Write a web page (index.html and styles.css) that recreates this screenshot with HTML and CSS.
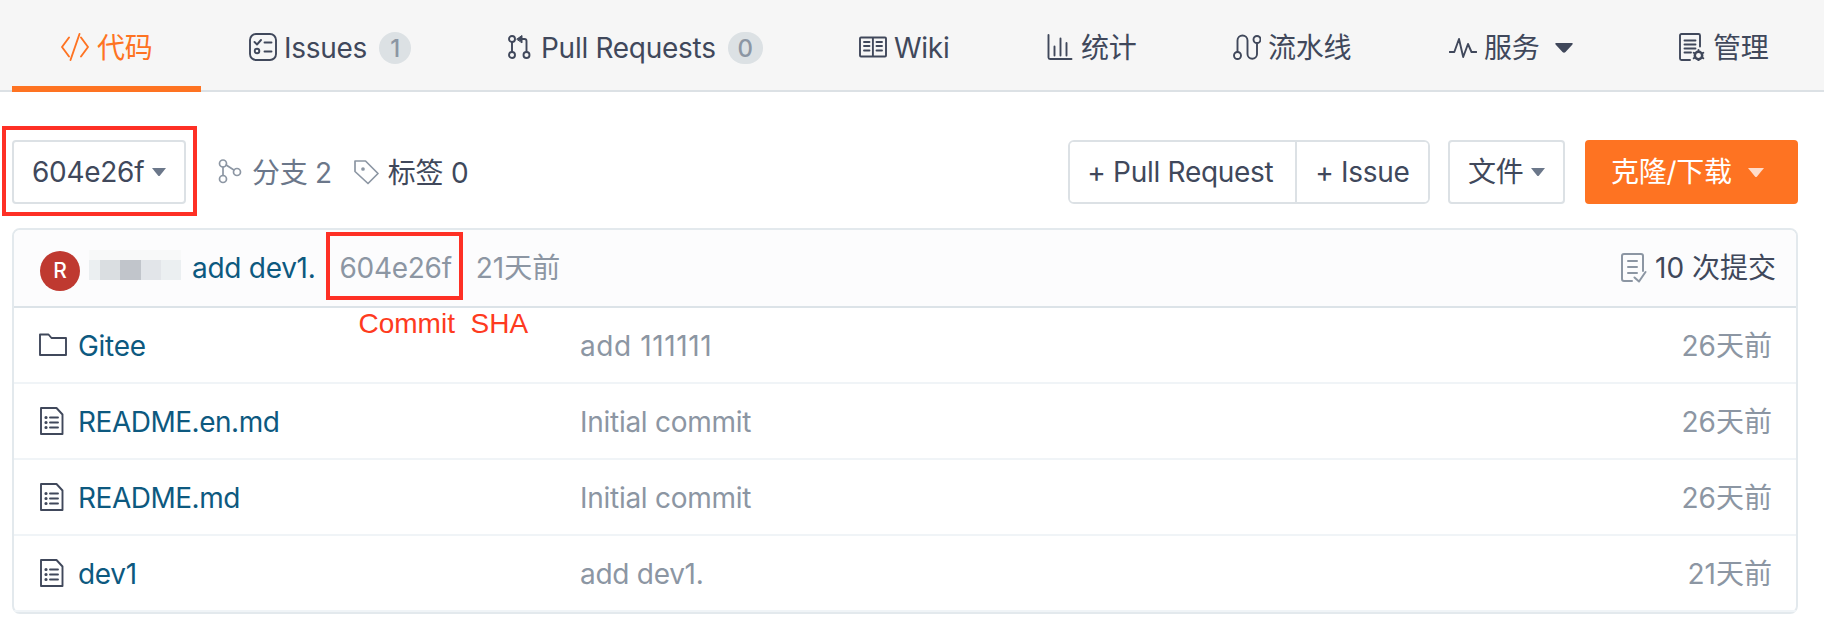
FILE: index.html
```html
<!DOCTYPE html>
<html lang="zh-CN">
<head>
<meta charset="utf-8">
<title>代码</title>
<link rel="stylesheet" href="styles.css">
</head>
<body>
<nav class="nav">
  <a class="tab active"><svg class="ic" viewBox="0 0 28 28"><path d="M8 4.500 1 14l7 9.500M20 4.500 27 14l-7 9.500M18.500 1 9.500 27"/></svg><span>代码</span></a>
  <a class="tab"><svg class="ic" viewBox="0 0 28 28"><rect x="1" y="1" width="26" height="26" rx="6"/><path d="m5.500 9 2.500 2.500L12 7M15.500 9.500h7M15.500 18.500h7"/><circle cx="8" cy="18" r="2.300"/></svg><span>Issues</span><b class="count">1</b></a>
  <a class="tab"><svg class="ic" viewBox="0 0 28 28"><circle cx="6" cy="6" r="3"/><circle cx="6" cy="22" r="3"/><circle cx="20.500" cy="22" r="3"/><path d="M6 9v10M20.500 19V8q0-2-2-2H14"/><path class="solid" d="m11 6 5-3.500v7z"/></svg><span>Pull Requests</span><b class="count wide">0</b></a>
  <a class="tab"><svg class="ic" viewBox="0 0 28 28"><rect x="1" y="4.500" width="26" height="19" rx="1"/><path d="M13.900 5v18M5 9h5.500M5 13h5.500M5 17.500h5.500M17.500 9H23M17.500 13H23M17.500 17.500H23"/></svg><span>Wiki</span></a>
  <a class="tab"><svg class="ic" viewBox="0 0 28 28"><path d="M2.500 2v22.500q0 1.500 1.500 1.500H25.500M8.500 22.500v-9M14.500 22.500v-17M20.500 22.500V10"/></svg><span>统计</span></a>
  <a class="tab"><svg class="ic" viewBox="0 0 28 28"><circle cx="4.500" cy="22.500" r="3.500"/><circle cx="24" cy="6.500" r="3.500"/><path d="M4.500 19V7.500a5 5 0 0 1 10 0V21a4.750 4.750 0 0 0 9.500 0V10"/></svg><span>流水线</span></a>
  <a class="tab"><svg class="ic" viewBox="0 0 28 28"><path d="M.5 19h4.800L10 6l4.200 18L19 11l3.500 8h5"/></svg><span>服务</span><svg class="caret big" viewBox="0 0 18 10"><path d="M1 0h16q1.500.5 0 2L10.500 9q-1.500 1.500-3 0L1 2Q-.5.500 1 0z"/></svg></a>
  <a class="tab"><svg class="ic" viewBox="0 0 28 28"><path d="M12 27H3.500q-1.500 0-1.500-1.500V2.500Q2 1 3.500 1h17Q22 1 22 2.500V13.500M6.500 7.500H17.500M6.500 11.500H17.500M6.500 15.500H17.500M6.500 19.500h6.500"/><circle class="gear" cx="20.500" cy="22.500" r="3.700"/><path d="M20.500 17v1.500M20.500 26.500v1M15.700 19.700l1.500.900M23.800 24.400l1.500.900M15.700 25.300l1.500-.900M23.800 20.600l1.500-.900"/></svg><span>管理</span></a>
</nav>

<section class="toolbar">
  <button class="btn ref">604e26f<svg class="caret" viewBox="0 0 14 8"><path d="M0 0h14L8 7.500q-1 1-2 0z"/></svg><i class="mark ref-mark"></i></button>
  <a class="stat branch"><svg viewBox="0 0 26 26"><circle cx="5" cy="4.500" r="3.500"/><circle cx="5" cy="20" r="3.500"/><circle cx="19" cy="13" r="3.500"/><path d="M5 8v8.500M8.200 6l7.700 5"/></svg><span>分支 2</span></a>
  <a class="stat tag"><svg viewBox="0 0 26 26"><path d="M2 2h10.500L25 14.500 15 24.500 2 12.500z"/><circle class="dot" cx="10" cy="10" r="1"/></svg><span>标签 0</span></a>
  <div class="actions">
    <div class="group"><button>+ Pull Request</button><button>+ Issue</button></div>
    <button class="btn file">文件<svg class="caret" viewBox="0 0 14 8"><path d="M0 0h14L8 7.500q-1 1-2 0z"/></svg></button>
    <button class="btn clone">克隆/下载<svg class="caret" viewBox="0 0 16 9"><path d="M0 0h16L9 8.500q-1 1-2 0z"/></svg></button>
  </div>
</section>

<section class="panel">
  <header class="latest">
    <span class="avatar">R</span>
    <span class="mosaic"><i></i><i></i><i></i><i></i><i></i></span>
    <a class="message">add dev1.</a>
    <span class="sha">604e26f<i class="mark sha-mark"></i><em class="note">Commit&nbsp; SHA</em></span>
    <span class="when">21天前</span>
    <a class="commits"><svg viewBox="0 0 28 32"><path d="M12 29H4q-2 0-2-2V4q0-2 2-2h17q2 0 2 2v15M8 9h9M8 15h9M8 21h9M14.500 25.500l4.500 4 6.500-9.500"/></svg><span>10 次提交</span></a>
  </header>
  <div class="row"><svg class="fi" viewBox="0 0 30 30"><path d="M2 25V4.500h8.500L13.500 8H28v17z"/></svg><a>Gitee</a><span class="ones">add 111111</span><time>26天前</time></div>
  <div class="row"><svg class="fi" viewBox="0 0 30 30"><path d="M3 2h15.500l6 6.500V28H3z"/><path d="M12 11.500h8M12 16.500h8M12 21.500h8"/><path class="bullets" d="M8 11.500h.01M8 16.500h.01M8 21.500h.01"/></svg><a class="tight">README.en.md</a><span>Initial commit</span><time>26天前</time></div>
  <div class="row"><svg class="fi" viewBox="0 0 30 30"><path d="M3 2h15.500l6 6.500V28H3z"/><path d="M12 11.500h8M12 16.500h8M12 21.500h8"/><path class="bullets" d="M8 11.500h.01M8 16.500h.01M8 21.500h.01"/></svg><a class="tight">README.md</a><span>Initial commit</span><time>26天前</time></div>
  <div class="row"><svg class="fi" viewBox="0 0 30 30"><path d="M3 2h15.500l6 6.500V28H3z"/><path d="M12 11.500h8M12 16.500h8M12 21.500h8"/><path class="bullets" d="M8 11.500h.01M8 16.500h.01M8 21.500h.01"/></svg><a>dev1</a><span>add dev1.</span><time>21天前</time></div>
</section>
</body>
</html>
```
FILE: styles.css
```css
* { box-sizing: border-box; }
body {
  margin: 0;
  width: 1824px;
  height: 630px;
  overflow: hidden;
  background: #fff;
  color: #40485b;
  font: 28px/40px Inter, "Noto Sans CJK SC", sans-serif;
  letter-spacing: -0.28px;
  white-space: nowrap;
}
svg {
  flex: none;
  fill: none;
  stroke: currentColor;
  stroke-width: 1.9;
  stroke-linecap: round;
  stroke-linejoin: round;
}
button { font: inherit; letter-spacing: inherit; color: inherit; background: #fff; margin: 0; }
.nav {
  display: grid;
  grid-template-columns: 189px 257px 353px 187px 187px 216px 229px 187px;
  height: 92px;
  padding-left: 12px;
  background: #f6f6f6;
  border-bottom: 2px solid #dce1e5;
}
.tab {
  display: flex;
  align-items: center;
  height: 92px;
  padding: 0 0 0 48px;
  border-bottom: 6px solid transparent;
}
.tab.active { padding-left: 49px; color: #fe7322; border-color: #fe7322; }
.tab > span { margin: 9px 0 0 7px; }
.tab.active > span { margin-left: 8px; }
.ic { width: 28px; height: 28px; margin-top: 8px; }
.count {
  width: 32px;
  height: 32px;
  margin: 10px 0 0 12px;
  border-radius: 16px;
  background: #dce1e4;
  color: #8c96a3;
  font: 500 24px/33px Inter, sans-serif;
  text-align: center;
}
.count.wide { width: 35px; }
.solid { fill: currentColor; stroke-width: 1; }
.gear { stroke-width: 2.5; }
.caret { width: 14px; height: 8px; fill: #6b778a; stroke: none; }
.caret.big { width: 18px; height: 10px; margin: 9px 0 0 16px; fill: #40485b; }

.toolbar {
  display: flex;
  align-items: center;
  height: 64px;
  margin: 48px 26px 24px 12px;
}
.btn {
  display: flex;
  align-items: center;
  height: 64px;
  border: 2px solid #dce1e5;
  border-radius: 4px;
  padding: 0 0 0 18px;
}
.ref { position: relative; width: 174px; }
.ref .caret { margin-left: 8px; }
.mark { position: absolute; border: 4px solid #fe3025; }
.ref-mark { left: -12px; top: -16px; width: 195px; height: 90px; }
.stat { display: flex; align-items: center; }
.stat svg { width: 26px; height: 26px; color: #8c96a3; stroke-width: 1.7; }
.stat span { margin: 1px 0 0 8px; }
.branch { margin-left: 32px; color: #6b778a; }
.tag { margin-left: 21px; }
.tag span { margin-left: 9px; }
.dot { fill: currentColor; }
.actions { display: flex; margin-left: auto; }
.group {
  display: flex;
  width: 362px;
  height: 64px;
  border: 2px solid #dce1e5;
  border-radius: 6px;
  overflow: hidden;
}
.group button { border: 0; padding: 0; width: 132px; }
.group button:first-child { width: 228px; border-right: 2px solid #dce1e5; padding-right: 4px; }
.file { width: 117px; margin-left: 18px; }
.file .caret { margin-left: 8px; }
.clone {
  width: 213px;
  margin-left: 20px;
  padding-left: 24px;
  background: #fe7322;
  border-color: #fe7322;
  color: #fff;
}
.clone .caret { width: 16px; height: 9px; margin-left: 16px; fill: #ffdcca; }

.panel {
  height: 386px;
  margin: 0 26px 0 12px;
  border: 2px solid #e3e9ed;
  border-radius: 8px;
}
.latest {
  display: flex;
  align-items: center;
  height: 78px;
  padding: 0 20px 0 26px;
  background: #fcfcfd;
  border-bottom: 2px solid #dce3e8;
  border-radius: 6px 6px 0 0;
}
.avatar {
  width: 40px;
  height: 40px;
  margin-top: 6px;
  border-radius: 50%;
  background: #bf3930;
  color: #fff;
  font: 500 21px/40px Inter, sans-serif;
  text-align: center;
}
.mosaic {
  display: grid;
  grid-template-columns: 11px 20px 21px 20px 20px;
  height: 30px;
  margin: -6px 0 0 9px;
  padding-top: 10px;
  background: #f8f9f9;
}
.mosaic i { background: #ebeff1; }
.mosaic i:nth-child(2) { background: #dadee1; }
.mosaic i:nth-child(3) { background: #c1c5cb; }
.mosaic i:nth-child(4) { background: #e2e5e9; }
.message { margin-left: 11px; }
.message, .row a { color: #0d597f; }
.sha { position: relative; margin-left: 24px; color: #8c96a3; }
.sha-mark { left: -13px; top: -16px; width: 137px; height: 68px; }
.note {
  position: absolute;
  left: 19px;
  top: 56px;
  color: #fe3a20;
  font: normal 28px/40px "Liberation Sans", Arial, sans-serif;
  letter-spacing: 0;
}
.when { margin-left: 24px; color: #8c96a3; letter-spacing: 0; }
.commits { display: flex; align-items: center; margin-left: auto; letter-spacing: 0; }
.commits svg { width: 28px; height: 32px; margin: -1px 7px 0 0; color: #8c96a3; stroke-width: 2; }
.row {
  display: grid;
  grid-template-columns: 40px 502px 1fr auto;
  align-items: center;
  height: 76px;
  padding: 2px 24px 0 24px;
  border-bottom: 2px solid #f0f4f7;
  color: #8c96a3;
}
.row time { letter-spacing: 0; }
.row .tight { letter-spacing: -0.48px; }
.ones { letter-spacing: 0.6px; }
.fi { width: 30px; height: 30px; margin-top: -2px; color: #40485b; }
.bullets { stroke-width: 3.2; }
```
